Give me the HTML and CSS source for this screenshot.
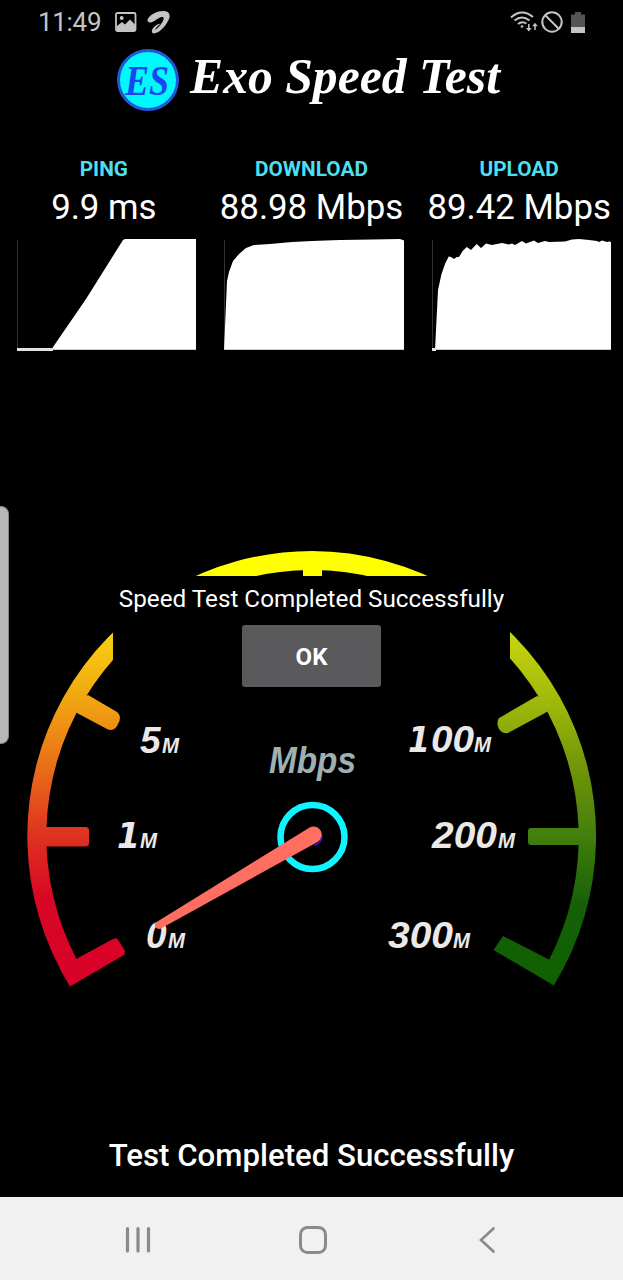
FILE: index.html
```
<!DOCTYPE html>
<html lang="en">
<head>
    <meta charset="utf-8" />
    <title>Exo Speed Test</title>
    <link rel="stylesheet" href="styles.css">
</head>
<body>
    <header class="status-bar">
        <span class="clock">11:49</span>
        <svg class="icon-image" width="22" height="20" viewBox="0 0 22 20">
            <rect x="1" y="1" width="19.5" height="18" rx="1.5" fill="none" stroke="#c4c4c4" stroke-width="1.8" />
            <circle cx="6.7" cy="6" r="2" fill="#c4c4c4" />
            <path d="M2 14l5-4 3 2.500 5-5 5 5V18H2z" fill="#c4c4c4" />
        </svg>
        <svg class="icon-swirl" width="24" height="24" viewBox="0 0 24 24">
            <path d="M1 8.500C4 4 11 .5 17 1c6 .5 7 5 4 10-3 6-9 12-14 12.500-2.500 0-3-3-.5-6 2-2.500 4.500-3.500 7-3.800-2.500 1.800-5 4-5.300 6C10 19 15 14 16.500 9.500c.8-3-2-3-4.500-1.500-3 1.700-5.500 4-8 4.500C1 13-.3 11 1 8.500z" fill="#c4c4c4" />
        </svg>
        <div class="spacer"></div>
        <svg class="icon-wifi" width="28" height="22" viewBox="0 0 28 22" fill="none" stroke="#c4c4c4" stroke-width="2">
            <path d="M1 6.500C8 0 16 0 23 6M4.500 9.500c5-4 10-4 15 0M8 13c3-2.500 5.500-2.500 8.500-.5" />
            <circle cx="12" cy="15.500" r="1.300" fill="#c4c4c4" stroke="none" />
            <path d="M18.800 13v6M25 19v-6" stroke-width="1.500" />
            <path d="M16 17h5.600l-2.800 3.500zM22.200 15.200h5.600L25 11.700z" fill="#c4c4c4" stroke="none" />
        </svg>
        <svg class="icon-block" width="22" height="22" viewBox="0 0 22 22" fill="none" stroke="#c4c4c4" stroke-width="2">
            <circle cx="11" cy="11" r="9.700" />
            <path d="M4 4l14 14" />
        </svg>
        <svg class="icon-battery" width="14" height="21" viewBox="0 0 14 21">
            <path d="M0 2.500h4V0h6v2.500h4V15H0z" fill="#555" />
            <path d="M0 15h14v6H0z" fill="#c4c4c4" />
        </svg>
    </header>

    <section class="brand">
        <svg width="390" height="62" viewBox="0 0 390 62">
            <circle cx="31" cy="31" r="29.500" fill="#00f8ff" stroke="#2457d6" stroke-width="3" />
            <text class="monogram" x="8" y="46" textLength="44" lengthAdjust="spacingAndGlyphs">ES</text>
            <text class="wordmark" x="73" y="44" textLength="310" lengthAdjust="spacingAndGlyphs">Exo Speed Test</text>
        </svg>
    </section>

    <section class="stats">
        <div class="stat">
            <h2>PING</h2>
            <p>9.9 ms</p>
            <svg class="chart" width="180" height="114" viewBox="0 0 180 114">
                <path class="axis" d="M.5 2v110" />
                <path class="area" d="M35 112v-1.500L69 61l37-59 2-1h71v111z" />
                <path class="base" d="M0 111.500h179" />
                <path class="flat" d="M0 111.500h36" />
            </svg>
        </div>
        <div class="stat">
            <h2>DOWNLOAD</h2>
            <p>88.98 Mbps</p>
            <svg class="chart" width="180" height="114" viewBox="0 0 180 114">
                <path class="axis" d="M.5 2v110" />
                <path class="area" d="M0 112L3 43 5 34 9 23 15 16 22 10 30 7 46 6 68 4 88 3 116 2 148 1.500 176 1 180 2.500 180 112z" />
                <path class="base" d="M0 111.500h180" />
            </svg>
        </div>
        <div class="stat">
            <h2>UPLOAD</h2>
            <p>89.42 Mbps</p>
            <svg class="chart" width="180" height="114" viewBox="0 0 180 114">
                <path class="axis" d="M.5 2v110" />
                <path class="area" d="M3 112L6 52 9.500 36 13 26 16.700 18.500 19 19 22 21 24.700 19 27 19 30.700 13 34.700 9 39 12 44.700 6 49 10 54 5.500 60 7 70 5 77 6.500 80 5.500 83 7 90 3 94 5.500 102 2.500 106 5 113 3 117 4 133 3.500 140 1.500 147 1 157 2 165 3 167 4 170 2.500 175 4 177 3.500 179 4 179 112z" />
                <path class="base" d="M4 111.500h175" />
                <path class="flat" d="M0 111.500h4" />
            </svg>
        </div>
    </section>

    <main class="meter">
        <svg class="gauge" width="623" height="450" viewBox="0 0 623 450">
            <defs>
                <linearGradient id="slow" gradientUnits="userSpaceOnUse" x1="0" y1="0" x2="0" y2="450">
                    <stop offset=".06" stop-color="#ff0" />
                    <stop offset=".2" stop-color="#f8d010" />
                    <stop offset=".36" stop-color="#f0a012" />
                    <stop offset=".52" stop-color="#e86418" />
                    <stop offset=".64" stop-color="#de3420" />
                    <stop offset=".78" stop-color="#d90724" />
                    <stop offset="1" stop-color="#d80028" />
                </linearGradient>
                <linearGradient id="fast" gradientUnits="userSpaceOnUse" x1="0" y1="0" x2="0" y2="450">
                    <stop offset=".06" stop-color="#ff0" />
                    <stop offset=".2" stop-color="#c6d40c" />
                    <stop offset=".36" stop-color="#9cb60a" />
                    <stop offset=".5" stop-color="#6f9408" />
                    <stop offset=".64" stop-color="#44800c" />
                    <stop offset=".8" stop-color="#156008" />
                    <stop offset="1" stop-color="#106000" />
                </linearGradient>
            </defs>

            <!-- slow half -->
            <g fill="url(#slow)">
                <path d="M312 6A285 285 0 0 0 70 441L77 415A266 266 0 0 1 312 25z" />
                <path d="M70 441.500L123 410.500Q126 408 124.500 405L118.500 395.500Q116.500 392 113 394L77 413.500 60 424z" />
                <rect x="36" y="282" width="53" height="19.500" rx="3.500" />
                <path d="M88 150L117 167Q121 170 119.500 176L117 181Q113 187 107 184L77 168 66 160z" />
            </g>

            <!-- fast half -->
            <g fill="url(#fast)">
                <path d="M312 6A285 285 0 0 1 554 440L549 415A267.500 267.500 0 0 0 312 25z" />
                <path d="M554 440.500L493.500 405 503 391 550 415 560 425z" />
                <rect x="528" y="283" width="60" height="17" rx="3" />
                <path d="M537 151L500 172.500Q497 174 497.500 180L499 184Q502 189 508 188L545 168 556 160z" />
            </g>
            <path d="M303 20h19v20h-19z" fill="#ff0" />

            <g class="marks">
                <text x="140" y="208">5</text><text class="unit" x="162" y="208" textLength="17" lengthAdjust="spacingAndGlyphs">M</text>
                <text class="one" x="117" y="303" textLength="23" lengthAdjust="spacingAndGlyphs">1</text><text class="unit" x="140" y="303" textLength="17" lengthAdjust="spacingAndGlyphs">M</text>
                <text x="146" y="403">0</text><text class="unit" x="168" y="403" textLength="17" lengthAdjust="spacingAndGlyphs">M</text>
                <text class="one" x="408" y="207" textLength="22" lengthAdjust="spacingAndGlyphs">1</text><text x="431" y="207" textLength="43" lengthAdjust="spacingAndGlyphs">00</text><text class="unit" x="474" y="207" textLength="17" lengthAdjust="spacingAndGlyphs">M</text>
                <text x="432" y="303" textLength="65" lengthAdjust="spacingAndGlyphs">200</text><text class="unit" x="498" y="303" textLength="17" lengthAdjust="spacingAndGlyphs">M</text>
                <text x="388" y="403" textLength="65" lengthAdjust="spacingAndGlyphs">300</text><text class="unit" x="453" y="403" textLength="17" lengthAdjust="spacingAndGlyphs">M</text>
                <text class="caption" x="269" y="228" textLength="87" lengthAdjust="spacingAndGlyphs">Mbps</text>
            </g>

            <circle cx="312.500" cy="292" r="32" fill="none" stroke="#10f4ff" stroke-width="6.500" />
            <path d="M314 300.500Q322 298 322 290" fill="none" stroke="#3a10e0" stroke-width="1.500" />
            <path d="M308 283.500A8.300 8.300 0 1 1 317.500 297L160 384Q154 384 155 378z" fill="#ff6f61" />
        </svg>

        <div class="dialog">
            <p>Speed Test Completed Successfully</p>
            <button>OK</button>
        </div>
    </main>

    <p class="result">Test Completed Successfully</p>

    <nav class="nav-bar">
        <svg width="28" height="28" viewBox="0 0 28 28" fill="none" stroke="#8a8a8a" stroke-width="3.200" stroke-linecap="round">
            <path d="M3.500 2.500v22.500M14 2.500v22.500M24.500 2.500v22.500" />
        </svg>
        <svg width="28" height="28" viewBox="0 0 28 28" fill="none" stroke="#8a8a8a" stroke-width="3">
            <rect x="1.500" y="1.500" width="25" height="25" rx="7" />
        </svg>
        <svg width="28" height="28" viewBox="0 0 28 28" fill="none" stroke="#8a8a8a" stroke-width="2.600" stroke-linecap="round">
            <path d="M20.500 2.500L8 14l12.500 11.500" />
        </svg>
    </nav>

    <div class="edge-handle"></div>
</body>
</html>
```
FILE: styles.css
```
* {
    padding: 0;
    margin: 0;
    box-sizing: border-box;
}

body {
    position: relative;
    display: flex;
    flex-direction: column;
    height: 1280px;
    background-color: black;
    color: white;
    font-family: Roboto, sans-serif;
    overflow: hidden;
}

svg {
    display: block;
    flex: none;
}

.status-bar {
    display: flex;
    align-items: center;
    height: 44px;
    padding: 0 38px;
    color: #c4c4c4;
}

.clock {
    width: 77px;
    font-size: 26px;
    letter-spacing: -0.3px;
}

.icon-swirl {
    margin-left: 10px;
}

.spacer {
    flex: 1;
}

.icon-block {
    margin: 0 8px 0 3px;
}

.brand {
    height: 113px;
    padding: 5px 0 0 117px;
}

.monogram, .wordmark {
    font-family: "Liberation Serif", serif;
    font-style: italic;
    font-weight: bold;
}

.monogram {
    font-size: 42px;
    fill: #1846f0;
}

.wordmark {
    font-size: 51px;
    fill: white;
}

.stats {
    display: grid;
    grid-template-columns: repeat(3, 1fr);
    height: 241px;
}

.stat {
    text-align: center;
    white-space: nowrap;
}

.stat h2 {
    color: #4ddff0;
    font-size: 20.800px;
    line-height: 24px;
}

.stat p {
    margin: 5px 0 9px;
    font-size: 34.800px;
    line-height: 43px;
}

.chart {
    margin-left: 16.500px;
}

.area {
    fill: white;
}

.axis {
    stroke: #333;
}

.base {
    stroke: #ccc;
}

.flat {
    stroke: #dfe5e5;
    stroke-width: 3;
}

.meter {
    position: relative;
    height: 738px;
    padding-top: 147px;
}

.marks {
    font-family: "Liberation Sans", sans-serif;
    font-style: italic;
    font-weight: bold;
    font-size: 37px;
    fill: #ebe8e8;
}

.marks .unit {
    font-size: 22px;
}

.marks .one {
    font-family: "DejaVu Sans", sans-serif;
    font-size: 35px;
}

.marks .caption {
    fill: #9fb0b3;
    font-size: 36px;
}

/* covers the upper part of the dial */
.dialog {
    position: absolute;
    left: 113px;
    top: 178px;
    width: 397px;
    height: 118px;
    background-color: black;
    text-align: center;
}

.dialog p {
    padding-top: 8px;
    font-size: 24.250px;
    line-height: 31px;
    white-space: nowrap;
}

.dialog button {
    width: 139px;
    height: 62px;
    margin-top: 10px;
    padding-top: 2px;
    border: none;
    border-radius: 3px;
    background-color: #5a595b;
    color: white;
    font: bold 24px Roboto, sans-serif;
}

.result {
    height: 61px;
    font-size: 31.200px;
    font-weight: 500;
    line-height: 40px;
    text-align: center;
}

.nav-bar {
    display: flex;
    align-items: center;
    justify-content: space-between;
    height: 83px;
    padding: 3px 122px 0 124px;
    background-color: #f1f1f1;
}

.edge-handle {
    position: absolute;
    left: 0;
    top: 506px;
    width: 9px;
    height: 238px;
    border: 1px solid #888;
    border-left: none;
    border-radius: 0 8px 8px 0;
    background-color: #b8b8b8;
}
```
